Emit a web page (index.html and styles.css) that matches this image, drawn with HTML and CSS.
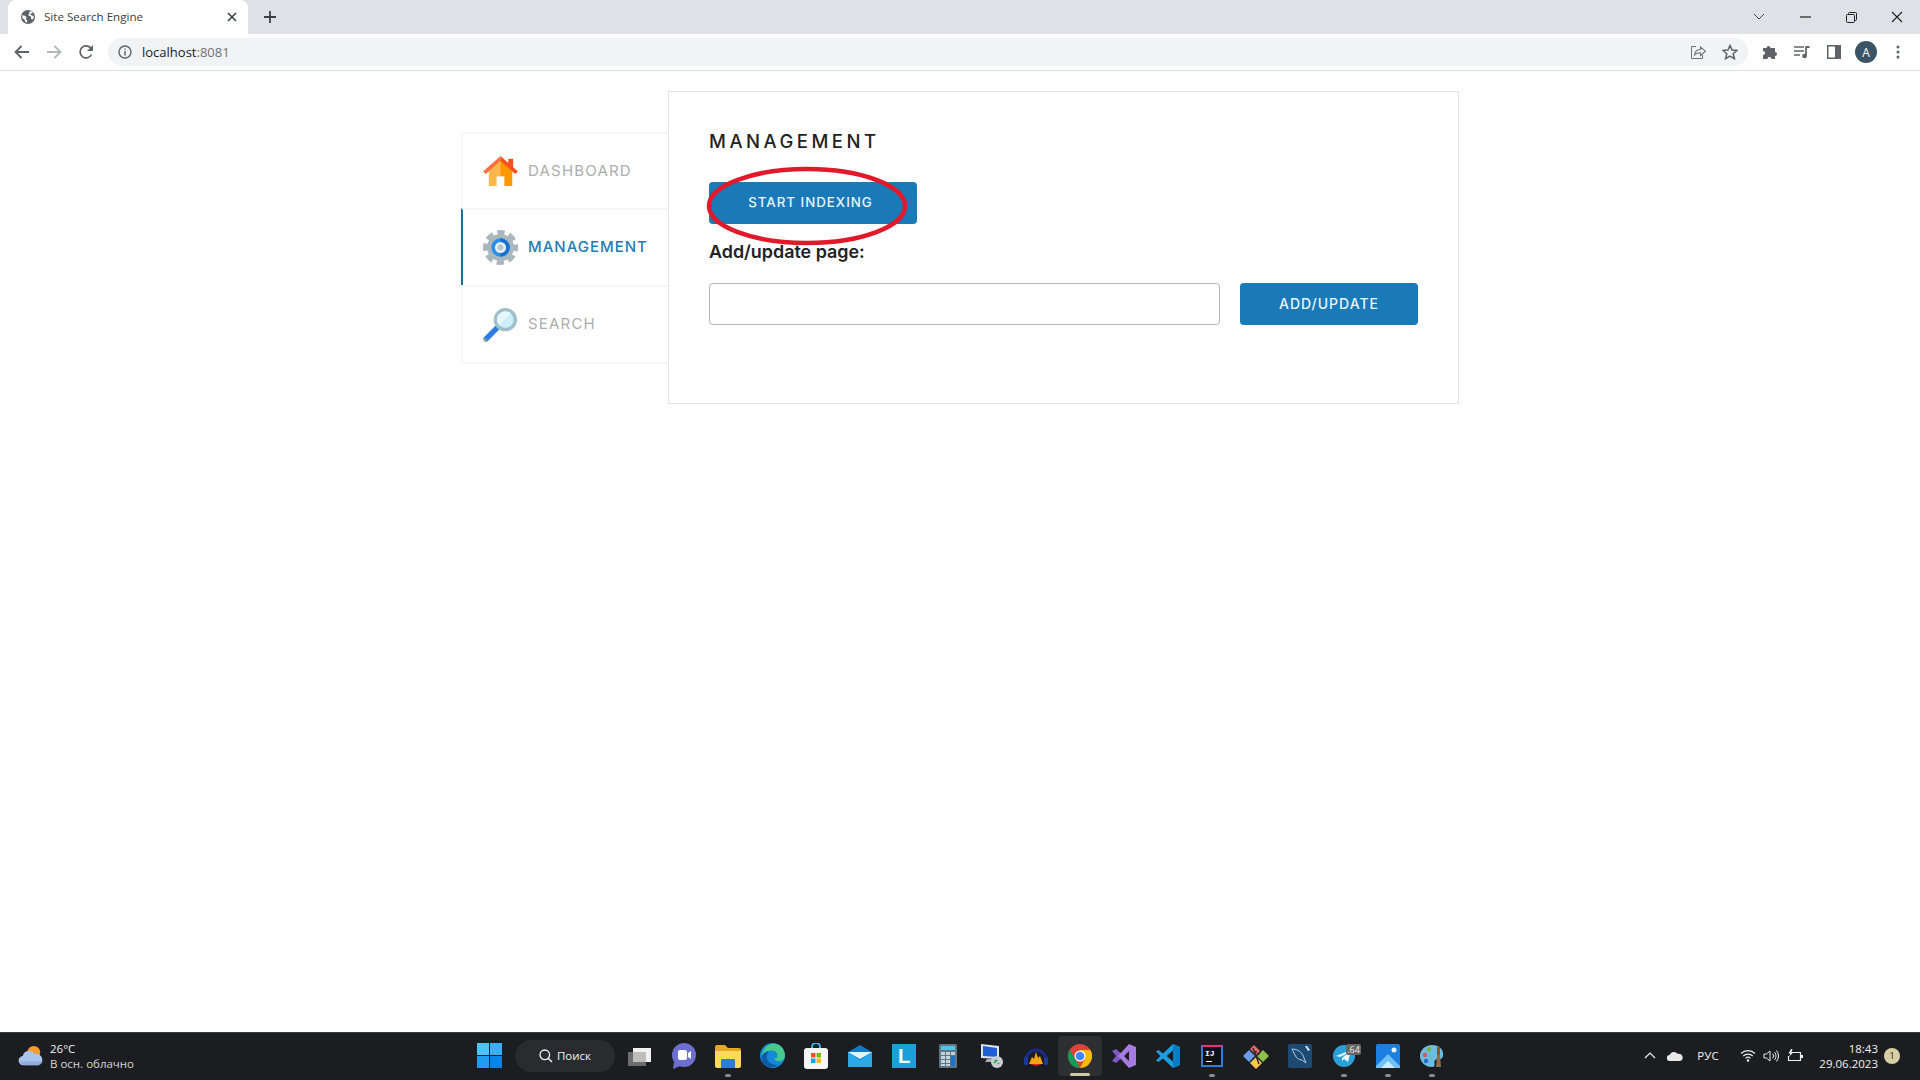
FILE: index.html
```html
<!DOCTYPE html>
<html lang="ru">
<head>
<meta charset="utf-8">
<title>Site Search Engine</title>
<link rel="stylesheet" href="styles.css">
</head>
<body>
<header class="chrome">
  <div class="tabstrip">
    <div class="tab">
      <svg class="favicon" viewBox="0 0 16 16"><circle cx="8" cy="8" r="8" fill="#5f6368"/><path d="M1.500 6l3 .5 2 2-1 1.500 1.500 2v2.500l-2-1-1-2.500-2.500-2zM9 2l3-.5 1.500 1.500-2 1-1 1.500 3 1 1.500 1.500-2 3-1.500-1v-2.500l-2.500-1-.5-1.500 1.500-1.500z" fill="#fff"/></svg>
      <span class="tab-title">Site Search Engine</span>
      <svg class="tab-close" viewBox="0 0 10 10"><path d="M1 1l8 8M9 1l-8 8" stroke="#3c4043" stroke-width="1.600"/></svg>
    </div>
    <svg class="newtab" viewBox="0 0 12 12"><path d="M6 0v12M0 6h12" stroke="#3c4043" stroke-width="1.800"/></svg>
    <div class="strip-space"></div>
    <div class="winbtn"><svg width="12" height="8" viewBox="0 0 12 8"><path d="M1 1l5 5 5-5" fill="none" stroke="#3c4043" stroke-width="1"/></svg></div>
    <div class="winbtn"><svg width="11" height="2" viewBox="0 0 11 2"><path d="M0 1h11" stroke="#1f1f1f" stroke-width="1.200"/></svg></div>
    <div class="winbtn"><svg width="11" height="11" viewBox="0 0 11 11"><path d="M.5 3.500a1 1 0 0 1 1-1h6a1 1 0 0 1 1 1v6a1 1 0 0 1-1 1h-6a1 1 0 0 1-1-1zM2.500 2.500v-1a1 1 0 0 1 1-1h6a1 1 0 0 1 1 1v6a1 1 0 0 1-1 1h-1" fill="none" stroke="#1f1f1f"/></svg></div>
    <div class="winbtn"><svg width="12" height="12" viewBox="0 0 12 12"><path d="M1 1l10 10M11 1L1 11" stroke="#1f1f1f" stroke-width="1.100"/></svg></div>
  </div>
  <div class="toolbar">
    <div class="tbtn"><svg width="16" height="14" viewBox="0 0 16 14"><path d="M15 7H2M7.500 1L1.500 7l6 6" fill="none" stroke="#5f6368" stroke-width="1.800"/></svg></div>
    <div class="tbtn"><svg width="16" height="14" viewBox="0 0 16 14"><path d="M1 7h13M8.500 1l6 6-6 6" fill="none" stroke="#b5b7ba" stroke-width="1.800"/></svg></div>
    <div class="tbtn"><svg width="16" height="16" viewBox="0 0 16 16"><path d="M13.500 10.500A6 6 0 1 1 13 4.500" fill="none" stroke="#5f6368" stroke-width="1.700"/><path d="M15 1v6H9z" fill="#5f6368"/></svg></div>
    <div class="omnibox">
      <svg class="omni-info" viewBox="0 0 14 14"><circle cx="7" cy="7" r="6" fill="none" stroke="#5f6368" stroke-width="1.400"/><path d="M7 6v4.500M7 3.500v1.300" stroke="#5f6368" stroke-width="1.400"/></svg>
      <span class="url">localhost<span class="url-port">:8081</span></span>
      <span class="omni-space"></span>
      <svg class="omni-icon" viewBox="0 0 16 16"><path d="M6 2.500H1.500v12h11V11" fill="none" stroke="#6e7175" stroke-width="1"/><path d="M4.500 11c.5-4 3-5.500 6-5.500V3l5 4.200-5 4.300V8.800c-2.500 0-4.500.5-6 2.200z" fill="none" stroke="#6e7175" stroke-width="1.100"/></svg>
      <svg class="omni-icon omni-star" viewBox="0 0 16 16"><path d="M8 1.500l2 4.600 5 .4-3.800 3.300 1.200 4.900L8 12.100l-4.400 2.600 1.200-4.900L1 6.500l5-.4z" fill="none" stroke="#5f6368" stroke-width="1.500"/></svg>
    </div>
    <div class="tbtn"><svg width="16" height="16" viewBox="0 0 16 16"><path d="M1 4h3.500a2 2 0 1 1 4 0H13v4a2 2 0 1 1 0 4v3H9.500a2 2 0 1 0-4 0H1v-4a2 2 0 1 0 0-4z" fill="#5f6368"/></svg></div>
    <div class="tbtn"><svg width="16" height="14" viewBox="0 0 16 14"><path d="M0 2h10M0 6h10M0 10h6" stroke="#5f6368" stroke-width="1.300"/><path d="M12 1.500v10" stroke="#5f6368" stroke-width="1.700"/><path d="M12 1h3.500v2H12z" fill="#5f6368"/><circle cx="10.500" cy="11" r="2.300" fill="#5f6368"/></svg></div>
    <div class="tbtn"><svg width="14" height="14" viewBox="0 0 14 14"><path d="M0 0h14v14H0z" fill="#5f6368"/><path d="M1.500 1.500h6.500v11H1.500z" fill="#fff"/></svg></div>
    <div class="tbtn"><span class="avatar">A</span></div>
    <div class="tbtn"><svg width="4" height="14" viewBox="0 0 4 14"><circle cx="2" cy="2" r="1.500" fill="#5f6368"/><circle cx="2" cy="7" r="1.500" fill="#5f6368"/><circle cx="2" cy="12" r="1.500" fill="#5f6368"/></svg></div>
  </div>
</header>

<main class="page">
  <div class="app">
    <nav class="sidebar">
      <a class="nav-item">
        <svg class="nav-icon" viewBox="0 0 36 32"><path d="M26 3h5v10h-5z" fill="#f4511e"/><path d="M6 14L18 4l12 10v17H6z" fill="#ffb74d"/><path d="M18 4l12 10v17H18z" fill="#ff9800"/><path d="M14 21h8v10h-8z" fill="#fff"/><path d="M0 16L18 0v5L3 18.500z" fill="#ff7043"/><path d="M36 16L18 0v5l15 13.500z" fill="#f4511e"/></svg>
        <span>Dashboard</span>
      </a>
      <a class="nav-item nav-active">
        <svg class="nav-icon" viewBox="0 0 36 36"><circle cx="18" cy="18" r="14" fill="#aab8be"/><circle cx="18" cy="18" r="15.500" fill="none" stroke="#aab8be" stroke-width="5" stroke-dasharray="7.600 4.580" stroke-dashoffset="3.800"/><circle cx="18" cy="18" r="9.500" fill="#2a8fe8"/><path d="M18 8.500a9.500 9.500 0 0 1 0 19z" fill="#1670d0"/><circle cx="18" cy="18" r="5.700" fill="#e8f1f5"/><circle cx="18" cy="18" r="3" fill="#b7c4ca"/></svg>
        <span>Management</span>
      </a>
      <a class="nav-item">
        <svg class="nav-icon" viewBox="0 0 36 36"><path d="M13 19l4 4L5 35c-2 2-6-2-4-4z" fill="#2f7de1"/><path d="M1 31l4 4c-1.500 1.500-3 1-4 0s-1.500-2.500 0-4z" fill="#90a4ae"/><circle cx="23" cy="13" r="12" fill="#9fbfca"/><circle cx="23" cy="13" r="8.500" fill="#cdeefa"/><path d="M16.500 18.500a8.500 8.500 0 0 1 12-12z" fill="#e8f7fc"/></svg>
        <span>Search</span>
      </a>
    </nav>
    <section class="panel">
      <h2 class="panel-title">Management</h2>
      <div class="start-wrap">
        <button class="btn btn-start" type="button">Start indexing</button>
        <svg class="annotation" viewBox="0 0 204 84"><ellipse cx="102" cy="42" rx="98" ry="37" fill="none" stroke="#e0192b" stroke-width="4.500"/></svg>
      </div>
      <label class="field-label" for="page-url">Add/update page:</label>
      <div class="field-row">
        <input id="page-url" class="field-input" type="text">
        <button class="btn btn-add" type="button">Add/update</button>
      </div>
    </section>
  </div>
</main>

<footer class="taskbar">
  <div class="weather">
    <svg class="weather-icon" viewBox="0 0 28 24"><circle cx="17" cy="8" r="7" fill="#f59b2d"/><path d="M6 22a5 5 0 0 1-1-10 7 7 0 0 1 13-2 6 6 0 0 1 4 12z" fill="#a9c5ec"/><path d="M2 18a5 5 0 0 0 4 4h16a6 6 0 0 0 5-4z" fill="#7f9fd8" opacity=".6"/></svg>
    <div class="weather-text"><div>26°C</div><div class="weather-sub">В осн. облачно</div></div>
  </div>
  <div class="task-center">
    <div class="task-slot"><svg width="25" height="25" viewBox="0 0 25 25"><path d="M0 0h12v12H0z" fill="#4cc2ff"/><path d="M13 0h12v12H13z" fill="#37b0f5"/><path d="M0 13h12v12H0z" fill="#1f9cf0"/><path d="M13 13h12v12H13z" fill="#0a84e0"/></svg></div>
    <div class="search-pill">
      <svg width="14" height="14" viewBox="0 0 14 14"><circle cx="5.800" cy="5.800" r="4.800" fill="none" stroke="#f2f2f2" stroke-width="1.300"/><path d="M9.200 9.200L13 13" stroke="#f2f2f2" stroke-width="1.400"/></svg>
      <span>Поиск</span>
    </div>
    <div class="task-slot"><svg width="24" height="24" viewBox="0 0 24 24"><path d="M0 8h18v14H0z" fill="#6d6d6d"/><path d="M5 4h18v14H5z" fill="#f1f1f1"/><path d="M5 8v10h13V8z" fill="#bdbdbd"/></svg></div>
    <div class="task-slot"><svg width="24" height="26" viewBox="0 0 24 26"><circle cx="12" cy="12" r="12" fill="#6d6fd0"/><path d="M2 19l-1 7 7-3z" fill="#6d6fd0"/><rect x="6" y="7" width="9" height="10" rx="2" fill="#fff"/><path d="M16 10l3-2v8l-3-2z" fill="#fff"/></svg></div>
    <div class="task-slot has-dot"><svg width="26" height="24" viewBox="0 0 26 24"><path d="M0 3a2 2 0 0 1 2-2h8l3 3h11a2 2 0 0 1 2 2v4H0z" fill="#e6a823"/><path d="M0 7h26v15a2 2 0 0 1-2 2H2a2 2 0 0 1-2-2z" fill="#fcd95b"/><path d="M6 16a1 1 0 0 1 1-1h12a1 1 0 0 1 1 1v8H6z" fill="#2b7cd3"/></svg></div>
    <div class="task-slot"><svg width="25" height="25" viewBox="0 0 25 25"><circle cx="12.500" cy="12.500" r="12.500" fill="#1489d8"/><path d="M6 4C11-1 21-.5 24 8c2 5 .5 9-3 10-3 1-6-.5-7-2.500 2 0 4-1 3.500-3.500C17 8 12 6 6 9c-2 1-3 3-4 5 0-4 1-7 4-10z" fill="#46c98c"/><path d="M9 24c-5-1-8-5-7.500-10C3 10 6 8.500 9 8c-3 3-3 8 0 11 2 2 5 3 9 2.500-2 2-6 3.500-9 2.500z" fill="#0d5aa7"/></svg></div>
    <div class="task-slot"><svg width="24" height="26" viewBox="0 0 24 26"><path d="M8 6V4a4 4 0 0 1 8 0v2" fill="none" stroke="#3ab6e8" stroke-width="2"/><rect y="5" width="24" height="21" rx="3" fill="#f5f5f5"/><path d="M7 10h4.500v4.500H7z" fill="#f25022"/><path d="M12.500 10H17v4.500h-4.500z" fill="#7fba00"/><path d="M7 15.500h4.500V20H7z" fill="#00a4ef"/><path d="M12.500 15.500H17V20h-4.500z" fill="#ffb900"/></svg></div>
    <div class="task-slot"><svg width="24" height="22" viewBox="0 0 24 22"><path d="M0 7L12 0l12 7v15H0z" fill="#0f7ac4"/><path d="M0 7l12 8 12-8v15H0z" fill="#29a9e8"/><path d="M0 7l12 7 12-7" fill="#dff3fb"/></svg></div>
    <div class="task-slot"><div class="logo-l">L</div></div>
    <div class="task-slot"><svg width="18" height="24" viewBox="0 0 18 24"><rect width="18" height="24" rx="1.500" fill="#5f7785"/><path d="M2 2h14v4H2z" fill="#4fc6e8"/><path d="M2 8h4v3H2zM7 8h4v3H7zM2 12h4v3H2zM7 12h4v3H7zM2 16h4v3H2zM7 16h4v3H7zM2 20h4v2H2zM7 20h4v2H7z" fill="#c5d3da"/><path d="M12 8h4v3h-4z" fill="#c5d3da"/><path d="M12 12h4v10h-4z" fill="#1974c6"/></svg></div>
    <div class="task-slot"><svg width="24" height="25" viewBox="0 0 24 25"><path d="M1 1l18 2v13L1 15z" fill="#dfe3ea"/><path d="M3 3l14 2v9L3 13z" fill="#1f5fd6"/><path d="M7 16h6v3H5z" fill="#a8acb3"/><circle cx="17" cy="19" r="6" fill="#c9ced3"/><path d="M14 20l3-3M15 17l1 1M18 20l1 1" stroke="#159a3c" stroke-width="1.500"/></svg></div>
    <div class="task-slot"><svg width="24" height="24" viewBox="0 0 24 24"><path d="M2 16a10 10 0 0 1 20 0" fill="none" stroke="#1b2a8c" stroke-width="3"/><rect y="13" width="4" height="8" rx="1" fill="#1b3a9c"/><rect x="20" y="13" width="4" height="8" rx="1" fill="#1b3a9c"/><path d="M5 20l3-7 2 2 2-7 2 6 2-2 3 8z" fill="#f6a313"/><path d="M6 20h12l-6 2z" fill="#d8261c"/></svg></div>
    <div class="task-slot task-active"><svg width="24" height="24" viewBox="0 0 24 24"><circle cx="12" cy="12" r="12" fill="#db4437"/><path d="M12 24a12 12 0 0 0 10.400-18H12l5 8.600z" fill="#fbbc05"/><path d="M1.600 6L7 14.800 12 24A12 12 0 0 1 1.600 6z" fill="#0f9d58"/><circle cx="12" cy="12" r="5.500" fill="#fff"/><circle cx="12" cy="12" r="4.300" fill="#4285f4"/></svg></div>
    <div class="task-slot"><svg width="24" height="24" viewBox="0 0 24 24"><path d="M0 7l4-2 8 7-8 7-4-2 4-5z" fill="#7e57c2"/><path d="M17 0l7 3v18l-7 3-11-12zM17 7l-5 5 5 5z" fill="#a67ce0" fill-rule="evenodd"/></svg></div>
    <div class="task-slot"><svg width="24" height="24" viewBox="0 0 24 24"><path d="M17 0l7 3v18l-7 3-10-9.500-4.500 3.500L0 16.500l4.500-4.500L0 7.500 2.500 6 7 9.500z" fill="#1b9de2"/><path d="M17 6.500L11 12l6 5.500z" fill="#1a1c1f"/><path d="M17 0l7 3v18l-7 3z" fill="#0a7cc4"/><path d="M17 6.500L11 12l6 5.500z" fill="#1a1c1f"/></svg></div>
    <div class="task-slot has-dot"><div class="logo-ij"><span>IJ</span><i></i></div></div>
    <div class="task-slot"><svg width="26" height="26" viewBox="0 0 26 26"><path d="M13 12L7 6l4-4 6 6z" fill="#e26a6a"/><path d="M12 13L6 7l-6 6 6 6z" fill="#6a9de8"/><path d="M14 13l6-6 6 6-6 6z" fill="#8bc34a"/><path d="M13 14l-6 6 6 6 6-6z" fill="#fbc94a"/><path d="M10 5l6 16M13 10v-2M10 16l3-3 4-3" stroke="#2b2b2b" stroke-width="1.500" fill="none"/></svg></div>
    <div class="task-slot"><svg width="24" height="24" viewBox="0 0 24 24"><rect width="24" height="24" rx="2" fill="#1d4a72"/><path d="M4 5c6 0 11 4 12 9l2 5-4-3c-3 0-6-2-7-5-1-2-2-4-3-6z" fill="none" stroke="#b4cbdc" stroke-width="1"/><path d="M17 2l3 5 2-1-3-4z" fill="#dfe8ef"/></svg></div>
    <div class="task-slot has-dot"><svg width="22" height="22" viewBox="0 0 22 22"><circle cx="11" cy="11" r="11" fill="#2a9fd8"/><path d="M3 11l15-6-3 12-4-3-2 2v-3l6-5-8 4z" fill="#e8f6fc"/></svg><span class="tg-badge">.64</span></div>
    <div class="task-slot has-dot"><svg width="24" height="24" viewBox="0 0 24 24"><rect width="24" height="24" rx="2" fill="#1a7fe0"/><path d="M0 22l12-12 12 12v2H0z" fill="#6ec1f5"/><path d="M5 24l7-7 7 7z" fill="#c7ecfb"/><circle cx="18" cy="6" r="2.500" fill="#e8f6fc"/></svg></div>
    <div class="task-slot has-dot"><svg width="24" height="24" viewBox="0 0 24 24"><path d="M12 1c7 0 12 4 11 11-1 5-6 2-8 4s2 7-3 7C5 23 0 18 0 12S5 1 12 1z" fill="#6bbddf"/><circle cx="5" cy="11" r="2.200" fill="#e25555"/><circle cx="9" cy="5.500" r="2.200" fill="#7cb342"/><circle cx="6" cy="17" r="2.200" fill="#1e6fd0"/><path d="M17 3h3v8h-3z" fill="#7b5a3a"/><path d="M17 11h3l1 12h-5z" fill="#8d6e4a"/></svg></div>
  </div>
  <div class="tray">
    <div class="tray-cell tray-chevron"><svg width="12" height="7" viewBox="0 0 12 7"><path d="M1 6l5-5 5 5" fill="none" stroke="#eee" stroke-width="1.200"/></svg></div>
    <div class="tray-cell tray-cloud"><svg width="16" height="10" viewBox="0 0 16 10"><path d="M3 10a3 3 0 0 1-.5-6A5 5 0 0 1 11 3a3.500 3.500 0 0 1 2 7z" fill="#e8e8e8"/></svg></div>
    <div class="tray-cell tray-lang">РУС</div>
    <div class="tray-cell tray-icon"><svg width="16" height="13" viewBox="0 0 16 13"><path d="M1 4.500a10 10 0 0 1 14 0M3.200 7a7 7 0 0 1 9.600 0M5.500 9.300a3.600 3.600 0 0 1 5 0" fill="none" stroke="#eee" stroke-width="1.100"/><circle cx="8" cy="11.500" r="1.200" fill="#eee"/></svg></div>
    <div class="tray-cell tray-icon"><svg width="16" height="14" viewBox="0 0 16 14"><path d="M1 5h2.500L7 2v10L3.500 9H1z" fill="none" stroke="#eee" stroke-width="1"/><path d="M9.500 4.500a3.500 3.500 0 0 1 0 5M11.500 3a6 6 0 0 1 0 8M13.500 1.500a8.500 8.500 0 0 1 0 11" fill="none" stroke="#eee" stroke-width="1"/></svg></div>
    <div class="tray-cell tray-batt"><svg width="16" height="14" viewBox="0 0 16 14"><path d="M5 3.500h8.500v8H1.500V7" fill="none" stroke="#eee" stroke-width="1.200"/><path d="M14 6h2v3h-2z" fill="#eee"/><path d="M4 0L1.500 4.500h2L2 8l4.500-5H4.500l1-3z" fill="#eee"/></svg></div>
    <div class="clock"><div>18:43</div><div>29.06.2023</div></div>
    <div class="notif">1</div>
  </div>
</footer>
</body>
</html>
```
FILE: styles.css
```css
* { box-sizing: border-box; }
html, body { height: 100%; }
body {
  margin: 0;
  height: 1080px;
  display: flex;
  flex-direction: column;
  overflow: hidden;
  background: #fff;
  font-family: "Open Sans", "Noto Sans", sans-serif;
}

/* browser chrome */
.chrome { flex: none; }
.tabstrip {
  height: 34px;
  background: #dee1e6;
  display: flex;
  align-items: stretch;
  padding-left: 8px;
}
.tab {
  width: 240px;
  background: #fff;
  border-radius: 8px 8px 0 0;
  display: flex;
  align-items: center;
  padding: 0 11px 0 13px;
}
.favicon { width: 14px; height: 14px; flex: none; }
.tab-title {
  flex: 1;
  margin-left: 9px;
  margin-bottom: 2px;
  font-size: 11.600px;
  color: #3c4043;
  white-space: nowrap;
}
.tab-close { width: 10px; height: 10px; flex: none; }
.newtab { width: 12px; height: 12px; align-self: center; margin-left: 16px; }
.strip-space { flex: 1; }
.winbtn { width: 46px; display: flex; align-items: center; justify-content: center; }

.toolbar {
  height: 37px;
  background: #fff;
  border-bottom: 1px solid #dadce0;
  display: flex;
  align-items: center;
  padding: 0 6px;
}
.tbtn {
  width: 32px;
  height: 32px;
  flex: none;
  display: flex;
  align-items: center;
  justify-content: center;
}
.omnibox {
  flex: 1;
  height: 28px;
  margin: 0 6px;
  background: #f1f3f4;
  border-radius: 14px;
  display: flex;
  align-items: center;
  padding: 0 10px;
}
.omni-info { width: 14px; height: 14px; flex: none; }
.url { margin-left: 10px; font-size: 13px; color: #202124; }
.url-port { color: #6e7175; }
.omni-space { flex: 1; }
.omni-icon { width: 16px; height: 16px; }
.omni-star { margin-left: 16px; }
.avatar {
  width: 22px;
  height: 22px;
  border-radius: 50%;
  background: #3c5566;
  color: #fff;
  font-size: 12px;
  display: flex;
  align-items: center;
  justify-content: center;
}

/* page */
.page { flex: 1; min-height: 0; padding-top: 20px; }
.app { width: 998px; margin: 0 auto; display: flex; align-items: flex-start; }
.sidebar {
  width: 207px;
  margin-top: 41px;
  flex: none;
  border: 2px solid #f6f6f6;
  border-right: 0;
  display: flex;
  flex-direction: column;
}
.nav-item {
  height: 77px;
  display: flex;
  align-items: center;
  gap: 10px;
  padding-left: 20px;
  margin-left: -2px;
  border-left: 2px solid transparent;
  border-top: 2px solid #f6f6f6;
  font-family: Inter, "Noto Sans", sans-serif;
  font-size: 15px;
  letter-spacing: 1.200px;
  text-transform: uppercase;
  color: #adadad;
  font-weight: 400;
}
.nav-item span { margin-bottom: 2px; }
.nav-item:first-child { border-top: 0; height: 74px; }
.nav-active { border-left-color: #1a6f9f; color: #1f7bb4; font-weight: 500; letter-spacing: 1px; }
.nav-icon { width: 35px; height: 35px; flex: none; }

.panel {
  flex: 1;
  border: 1px solid #e3e3e3;
  padding: 38px 40px 78px;
  font-family: Inter, "Noto Sans", sans-serif;
}
.panel-title {
  margin: 0;
  font-size: 18.500px;
  line-height: 22px;
  font-weight: 500;
  letter-spacing: 3.500px;
  text-transform: uppercase;
  color: #222;
}
.start-wrap { position: relative; width: 208px; margin-top: 30px; }
.btn {
  display: block;
  height: 42px;
  border: 0;
  border-radius: 4px;
  background: #1a7ab8;
  color: #eaf5fb;
  font-family: Inter, "Noto Sans", sans-serif;
  font-size: 13.300px;
  font-weight: 500;
  letter-spacing: 1px;
  text-transform: uppercase;
  padding: 0 0 2px;
}
.btn-start { width: 208px; padding-right: 5px; }
.annotation {
  position: absolute;
  left: -4px;
  top: -18px;
  width: 204px;
  height: 84px;
  pointer-events: none;
}
.field-label {
  display: block;
  margin-top: 16px;
  line-height: 24px;
  font-size: 17.900px;
  font-weight: 600;
  color: #222;
}
.field-row { display: flex; gap: 20px; margin-top: 19px; }
.field-input {
  flex: none;
  width: 511px;
  height: 42px;
  border: 1px solid #b5b5b5;
  border-radius: 4px;
  background: #fff;
}
.btn-add { width: 178px; font-size: 14px; }

/* taskbar */
.taskbar {
  flex: none;
  height: 48px;
  background: #1c1d20;
  border-top: 1px solid #3a3b3e;
  display: flex;
  align-items: center;
  padding-bottom: 2px;
  color: #f2f2f2;
}
.weather { width: 467px; display: flex; align-items: center; padding-left: 18px; gap: 6px; }
.weather-icon { width: 26px; height: 22px; flex: none; }
.weather-text { font-size: 11.500px; line-height: 15px; }
.weather-sub { color: #d6d6d6; }
.task-center { display: flex; align-items: center; height: 100%; }
.task-slot {
  position: relative;
  width: 44px;
  height: 40px;
  display: flex;
  align-items: center;
  justify-content: center;
}
.has-dot::after {
  content: "";
  position: absolute;
  left: 19px;
  bottom: -1px;
  width: 6px;
  height: 3px;
  border-radius: 2px;
  background: #8b8b8b;
}
.task-active { background: #2e2f32; border-radius: 4px; }
.task-active::after {
  content: "";
  position: absolute;
  left: 12px;
  bottom: 0;
  width: 20px;
  height: 3px;
  border-radius: 2px;
  background: #cfc9a6;
}
.search-pill {
  width: 100px;
  height: 32px;
  margin-left: 4px;
  margin-right: 3px;
  border-radius: 16px;
  background: #2a2b2e;
  display: flex;
  align-items: center;
  justify-content: center;
  gap: 4px;
  font-size: 11.500px;
}
.logo-l {
  width: 24px;
  height: 24px;
  background: #1ba0d8;
  color: #fff;
  font: 700 20px/24px "Liberation Sans", sans-serif;
  text-align: center;
}
.logo-ij {
  width: 22px;
  height: 22px;
  background: #111;
  border: 2px solid #2c7fe0;
  border-top-color: #ee2f7a;
  color: #fff;
  font: 700 8px/10px "Liberation Mono", monospace;
  padding: 2px;
  position: relative;
}
.logo-ij span { display: block; }
.logo-ij i {
  display: block;
  position: absolute;
  left: 3px;
  bottom: 3px;
  width: 6px;
  height: 1px;
  background: #fff;
}
.tg-badge {
  position: absolute;
  left: 24px;
  top: 8px;
  width: 15px;
  height: 11px;
  background: #666;
  border-radius: 2px;
  font-size: 9px;
  line-height: 11px;
  text-align: center;
  color: #eee;
}
.tray { flex: 1; display: flex; align-items: center; justify-content: flex-end; padding-right: 20px; }
.tray-cell { display: flex; align-items: center; justify-content: center; }
.tray-chevron { width: 24px; }
.tray-cloud { width: 26px; }
.tray-lang { width: 40px; margin-right: 8px; font-size: 11.500px; }
.tray-icon { width: 23px; }
.tray-batt { width: 26px; }
.clock { width: 70px; text-align: right; font-size: 11.500px; line-height: 15px; }
.notif {
  width: 16px;
  height: 16px;
  margin-left: 6px;
  border-radius: 50%;
  background: #d8d0a4;
  color: #222;
  font-size: 9px;
  line-height: 16px;
  text-align: center;
}
```
